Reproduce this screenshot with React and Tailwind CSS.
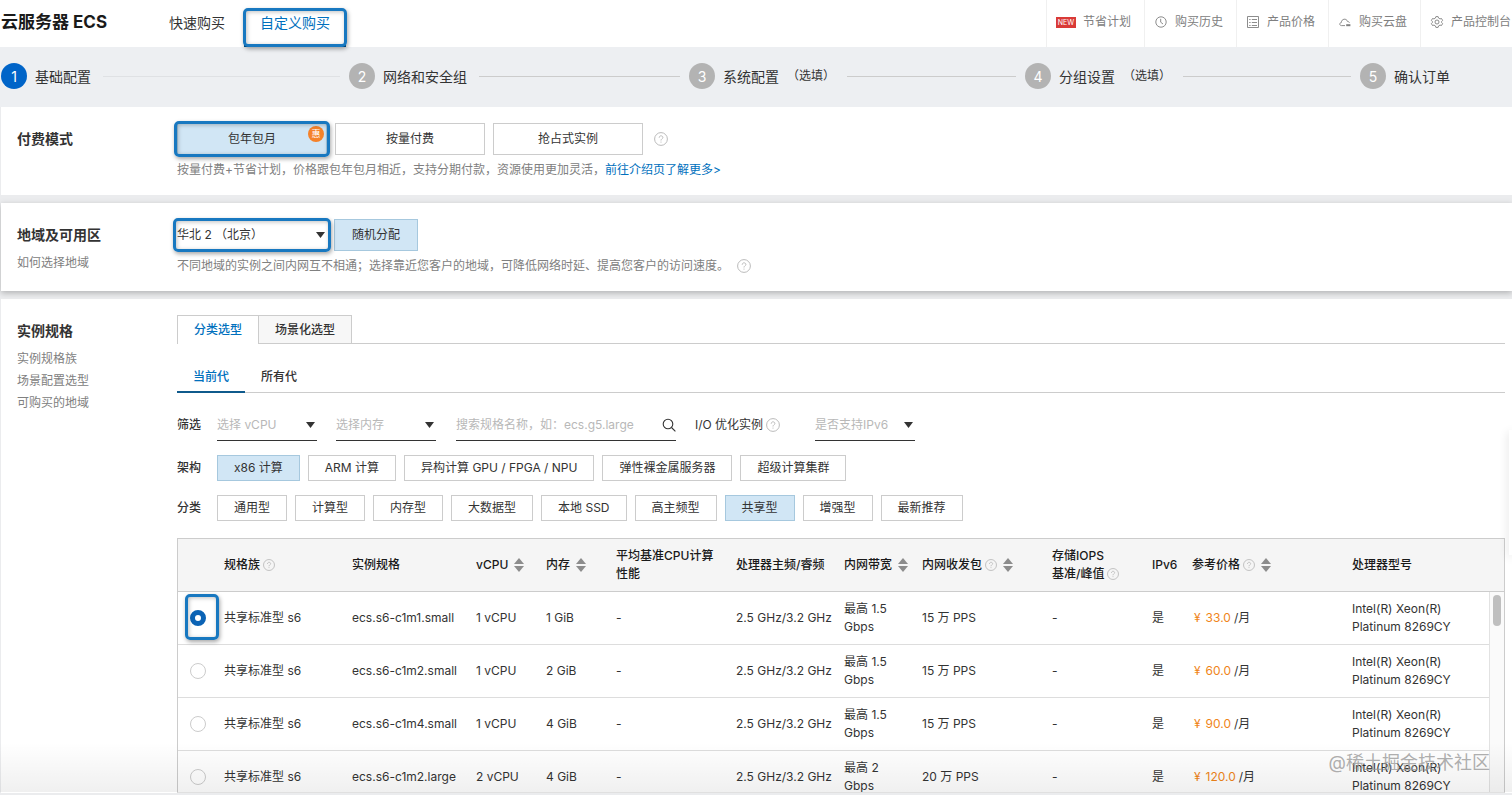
import React, { useState } from 'react';

const font = 'font-["Inter","Noto_Sans_CJK_SC",sans-serif]';

const links = [
  { label: '节省计划', icon: 'new' },
  { label: '购买历史', icon: 'clock' },
  { label: '产品价格', icon: 'list' },
  { label: '购买云盘', icon: 'cloud' },
  { label: '产品控制台', icon: 'gear' },
];

const steps = [
  { title: '基础配置' },
  { title: '网络和安全组' },
  { title: '系统配置', optional: true },
  { title: '分组设置', optional: true },
  { title: '确认订单' },
];

const archs = ['x86 计算', 'ARM 计算', '异构计算 GPU / FPGA / NPU', '弹性裸金属服务器', '超级计算集群'];
const categories = ['通用型', '计算型', '内存型', '大数据型', '本地 SSD', '高主频型', '共享型', '增强型', '最新推荐'];

const instances = [
  { spec: 'ecs.s6-c1m1.small', cpu: '1 vCPU', mem: '1 GiB', band: '最高 1.5', pps: '15 万 PPS', price: '33.0' },
  { spec: 'ecs.s6-c1m2.small', cpu: '1 vCPU', mem: '2 GiB', band: '最高 1.5', pps: '15 万 PPS', price: '60.0' },
  { spec: 'ecs.s6-c1m4.small', cpu: '1 vCPU', mem: '4 GiB', band: '最高 1.5', pps: '15 万 PPS', price: '90.0' },
  { spec: 'ecs.s6-c1m2.large', cpu: '2 vCPU', mem: '4 GiB', band: '最高 2', pps: '20 万 PPS', price: '120.0' },
];

const LinkIcon = ({ name }) => {
  if (name === 'new') {
    return (
      <span className="flex h-[11px] w-5 items-center justify-center bg-[#d93a37] text-[7px] leading-none text-white">
        NEW
      </span>
    );
  }
  return (
    <svg viewBox="0 0 14 14" className="size-[14px]" fill="none" stroke="#808080" strokeWidth="0.9">
      {name === 'clock' && (
        <>
          <circle cx="7" cy="7" r="5.2" />
          <path d="M6.7 3.8V7.2L9 9" />
        </>
      )}
      {name === 'list' && (
        <>
          <path d="M1.5 1.5H12.5V12.5H1.5Z" />
          <path d="M3.2 4.5H4.6M5.8 4.5H11M3.2 7.5H4.6M5.8 7.5H11M3.2 10.5H4.6M5.8 10.5H11" />
        </>
      )}
      {name === 'cloud' && (
        <>
          <path d="M7 10.6H3.4C1.2 10.4 1.2 7.8 3.3 7.6C3.4 3.6 8.6 3 9.4 6.4C10.6 6.4 11.2 7 11.4 7.8" />
          <path d="M8.2 10.2H12.4" strokeWidth="2" />
        </>
      )}
      {name === 'gear' && (
        <>
          <path d="M5.9 1.6H8.1L8.6 3.1L10 3.9L11.5 3.5L12.6 5.4L11.6 6.5V7.5L12.6 8.6L11.5 10.5L10 10.1L8.6 10.9L8.1 12.4H5.9L5.4 10.9L4 10.1L2.5 10.5L1.4 8.6L2.4 7.5V6.5L1.4 5.4L2.5 3.5L4 3.9L5.4 3.1Z" />
          <circle cx="7" cy="7" r="2" />
        </>
      )}
    </svg>
  );
};

const Help = ({ small }) => (
  <svg
    viewBox="0 0 14 14"
    className={small ? 'inline-block size-3 shrink-0' : 'inline-block size-[14px] shrink-0'}
    fill="none"
    stroke="#b3b3b3"
    strokeWidth="0.9"
  >
    <circle cx="7" cy="7" r="6.4" />
    <path d="M5.2 5.7C5.2 3.2 8.9 3.3 8.9 5.5C8.9 6.8 7 6.8 7 8.5M7 9.6V10.6" />
  </svg>
);

const Sorter = () => (
  <svg viewBox="0 0 10 14" className="inline-block h-[14px] w-[10px] shrink-0" fill="#8c8c8c">
    <path d="M5 0L10 6H0Z" />
    <path d="M5 14L10 8H0Z" />
  </svg>
);

const Caret = () => (
  <svg viewBox="0 0 9 6" className="pointer-events-none absolute right-[2px] top-1/2 h-[6px] w-[9px] -translate-y-1/2" fill="#333">
    <path d="M0 0H9L4.5 6Z" />
  </svg>
);

/* Blue frame that highlights a control */
const Highlight = ({ className }) => (
  <span
    className={`pointer-events-none absolute rounded-[5px] border-[3px] border-[#1878c0] shadow-[1px_2px_4px_rgba(0,0,0,0.35),inset_1px_1px_4px_rgba(0,0,0,0.25)] ${className}`}
  />
);

const FilterSelect = ({ label, className }) => (
  <div className={`relative w-[100px] border-b border-[#333] ${className}`}>
    <select aria-label={label} className="h-full w-full appearance-none bg-transparent text-[#b8b8b8] outline-none">
      <option>{label}</option>
    </select>
    <Caret />
  </div>
);

const Chips = ({ label, items, value, onChange }) => (
  <div className="flex items-center" role="group" aria-label={label}>
    <span className="w-10 font-medium">{label}</span>
    <div className="flex gap-2">
      {items.map((item) => (
        <button
          key={item}
          type="button"
          onClick={() => onChange(item)}
          className={`h-[26px] whitespace-nowrap border px-4 ${
            item === value ? 'border-[#a6c8de] bg-[#d1e6f5]' : 'border-[#ccc] bg-white'
          }`}
        >
          {item}
        </button>
      ))}
    </div>
  </div>
);

const Columns = () => (
  <colgroup>
    <col className="w-[38px]" />
    <col className="w-[128px]" />
    <col className="w-[124px]" />
    <col className="w-[70px]" />
    <col className="w-[70px]" />
    <col className="w-[120px]" />
    <col className="w-[108px]" />
    <col className="w-[78px]" />
    <col className="w-[130px]" />
    <col className="w-[100px]" />
    <col className="w-[40px]" />
    <col className="w-[160px]" />
    <col />
  </colgroup>
);

const HeadCell = ({ children, help, sort }) => (
  <th className="whitespace-nowrap pl-2 text-left font-medium">
    <span className="flex items-center">
      {children}
      {help && <span className="ml-[3px] flex"><Help small /></span>}
      {sort && <span className="ml-[6px] flex"><Sorter /></span>}
    </span>
  </th>
);

const InstanceTable = () => {
  const [selected, setSelected] = useState(0);
  return (
    <div className="mt-[17px] border border-[#ccc] border-b-[#e0e0e0] leading-[18px]">
      <table className="w-full table-fixed border-collapse bg-[#f5f5f5]">
        <Columns />
        <thead>
          <tr className="h-[52px] border-b border-[#ccc] text-[#1a1a1a]">
            <th />
            <HeadCell help>规格族</HeadCell>
            <HeadCell>实例规格</HeadCell>
            <HeadCell sort>vCPU</HeadCell>
            <HeadCell sort>内存</HeadCell>
            <HeadCell>平均基准CPU计算<br />性能</HeadCell>
            <HeadCell>处理器主频/睿频</HeadCell>
            <HeadCell sort>内网带宽</HeadCell>
            <HeadCell help sort>内网收发包</HeadCell>
            <th className="whitespace-nowrap pl-2 text-left font-medium">
              存储IOPS
              <span className="flex items-center gap-[3px]">基准/峰值<Help small /></span>
            </th>
            <HeadCell>IPv6</HeadCell>
            <HeadCell help sort>参考价格</HeadCell>
            <HeadCell>处理器型号</HeadCell>
          </tr>
        </thead>
      </table>
      <div className="flex h-[200px] overflow-hidden">
        <div className="min-w-0 flex-1">
          <table className="w-full table-fixed border-collapse">
            <Columns />
            <tbody>
              {instances.map((row, index) => (
                <tr key={row.spec} className="h-[53px] border-b border-[#ddd] [&>td]:whitespace-nowrap [&>td]:pl-2">
                  <td>
                    <span className="relative ml-1 flex size-4">
                      <input
                        type="radio"
                        name="instance"
                        aria-label={row.spec}
                        checked={selected === index}
                        onChange={() => setSelected(index)}
                        className="size-4 appearance-none rounded-full border border-[#ccc] bg-white checked:border-[5px] checked:border-[#0b63b5]"
                      />
                      {index === 0 && <Highlight className="-left-[5px] -top-[16px] h-[46px] w-[34px]" />}
                    </span>
                  </td>
                  <td>共享标准型 s6</td>
                  <td>{row.spec}</td>
                  <td>{row.cpu}</td>
                  <td>{row.mem}</td>
                  <td>-</td>
                  <td>2.5 GHz/3.2 GHz</td>
                  <td>{row.band}<br />Gbps</td>
                  <td>{row.pps}</td>
                  <td>-</td>
                  <td>是</td>
                  <td>
                    <span className="flex gap-[3px] pl-[2px]">
                      <span className="flex gap-[5px] text-[#f08519]"><span>¥</span>{row.price}</span>
                      /月
                    </span>
                  </td>
                  <td>Intel(R) Xeon(R)<br />Platinum 8269CY</td>
                </tr>
              ))}
            </tbody>
          </table>
        </div>
        <div className="w-[15px] border-l border-[#e2e2e2] bg-[#fafafa] px-[3px] pt-[3px]">
          <div className="h-[31px] rounded-full bg-[#bfbfbf]" />
        </div>
      </div>
    </div>
  );
};

const Section = ({ title, links: sideLinks = [], className = '', children }) => (
  <section className={`ml-px grid grid-cols-[160px_minmax(0,1fr)] bg-white pl-4 pt-4 ${className}`}>
    <div>
      <h2 className="text-[14px] font-semibold leading-8">{title}</h2>
      <div className="flex flex-col items-start pt-px text-[#808080]">
        {sideLinks.map((item) => (
          <a key={item} href="#" className="leading-[22px]">{item}</a>
        ))}
      </div>
    </div>
    <div>{children}</div>
  </section>
);

export default function App() {
  const [arch, setArch] = useState('x86 计算');
  const [category, setCategory] = useState('共享型');

  return (
    <div className={`relative min-h-screen overflow-hidden bg-[#ebecee] text-[12px] text-[#333] ${font}`}>
      {/* Top bar */}
      <header className="flex h-[47px] bg-white">
        <h1 className="ml-px w-[152px] whitespace-nowrap text-[17px] font-bold leading-[45px] text-[#1a1a1a]">云服务器 ECS</h1>
        <nav className="flex text-[14px] leading-[46px]">
          <a href="#" className="px-4">快速购买</a>
          <a href="#" className="relative ml-[3px] w-[102px] whitespace-nowrap border-b-2 border-[#00558f] px-4 text-center text-[#0070bd]">
            自定义购买
            <Highlight className="-left-px -right-px top-2 -bottom-[2px]" />
          </a>
        </nav>
        <div className="ml-auto flex shrink-0 text-[#808080]">
          {links.map((link) => (
            <a key={link.label} href="#" className="flex items-center gap-[7px] whitespace-nowrap border-l border-[#f0f0f0] pb-[3px] pl-[9px] pr-[13px] last:pr-px">
              <LinkIcon name={link.icon} />
              <span className="leading-[44px]">{link.label}</span>
            </a>
          ))}
        </div>
      </header>

      {/* Steps */}
      <ol className="grid h-[60px] grid-cols-[348fr_340fr_336fr_335fr_152fr] items-center bg-[#edeff2] pb-[2px] pl-px">
        {steps.map((step, index) => (
          <li key={step.title} className="flex items-center whitespace-nowrap text-[14px]">
            <span
              className={`flex size-[26px] items-center justify-center rounded-full text-white ${
                index === 0 ? 'bg-[#0064c8]' : 'bg-[#b3b3b3]'
              }`}
            >
              {index + 1}
            </span>
            <span className="ml-2">{step.title}</span>
            {step.optional && <span className="ml-2 text-[12px]">（选填）</span>}
            {index < 4 && <span className={`ml-3 mr-[9px] h-px flex-1 ${index === 0 ? 'bg-[#dfe1e4]' : 'bg-[#ccc]'}`} />}
          </li>
        ))}
      </ol>

      <main className="flex flex-col gap-2">
        <Section title="付费模式" className="pb-3">
          <div className="flex items-center gap-2">
            <button type="button" className="relative h-8 w-[150px] border border-[#a6c8de] bg-[#d1e6f5]">
              包年包月
              <span className="absolute right-[2px] top-[2px] flex size-4 items-center justify-center rounded-full bg-[#f5822a] text-[9px] text-white">惠</span>
              <Highlight className="-inset-x-1 -inset-y-[3px]" />
            </button>
            <button type="button" className="h-8 w-[150px] border border-[#ccc]">按量付费</button>
            <button type="button" className="h-8 w-[150px] border border-[#ccc]">抢占式实例</button>
            <span className="ml-[3px] flex"><Help /></span>
          </div>
          <p className="mt-1 pb-[2px] leading-[22px] text-[#808080]">
            按量付费+节省计划，价格跟包年包月相近，支持分期付款，资源使用更加灵活，
            <a href="#" className="text-[#0070bd]">前往介绍页了解更多&gt;</a>
          </p>
        </Section>

        <Section title="地域及可用区" links={['如何选择地域']} className="relative pb-3 shadow-[0_2px_6px_rgba(0,0,0,0.25)]">
          <div className="flex items-center gap-[7px]">
            <div className="relative h-8 w-[150px]">
              <select aria-label="地域" className="h-full w-full appearance-none bg-transparent outline-none">
                <option>华北 2 （北京）</option>
              </select>
              <Caret />
              <Highlight className="-inset-x-1 -inset-y-px" />
            </div>
            <button type="button" className="h-8 w-[84px] border border-[#a6c8de] bg-[#d1e6f5]">随机分配</button>
          </div>
          <p className="mt-1 flex items-center gap-2 pb-[2px] leading-[22px] text-[#808080]">
            不同地域的实例之间内网互不相通；选择靠近您客户的地域，可降低网络时延、提高您客户的访问速度。
            <Help />
          </p>
        </Section>

        <Section title="实例规格" links={['实例规格族', '场景配置选型', '可购买的地域']} className="pr-[7px]">
          <div role="tablist" className="flex h-[29px] font-medium">
            <button role="tab" aria-selected="true" type="button" className="w-[81px] border-l border-t border-[#ccc] text-[#0070bd]">分类选型</button>
            <button role="tab" aria-selected="false" type="button" className="w-[94px] border border-[#ccc] bg-[#f7f7f7]">场景化选型</button>
            <span className="flex-1 border-b border-[#ccc]" />
          </div>
          <div role="tablist" className="mt-4 flex h-[33px] border-b border-[#ccc] font-medium">
            <button role="tab" aria-selected="true" type="button" className="-mb-px w-[68px] border-b-2 border-[#0f5a8c] pt-[2px] text-[#0070bd]">当前代</button>
            <button role="tab" aria-selected="false" type="button" className="w-[68px] pt-px">所有代</button>
          </div>

          {/* Filters */}
          <div className="mt-4 flex h-8 items-center">
            <span className="w-10 font-medium">筛选</span>
            <FilterSelect label="选择 vCPU" className="mr-[19px] h-[31px]" />
            <FilterSelect label="选择内存" className="mr-5 h-[31px]" />
            <div className="mr-[19px] flex h-[31px] w-[220px] items-center border-b border-[#333]">
              <input
                type="text"
                aria-label="搜索规格名称"
                placeholder="搜索规格名称，如：ecs.g5.large"
                className="min-w-0 flex-1 bg-transparent outline-none placeholder:text-[#b8b8b8]"
              />
              <svg viewBox="0 0 14 14" className="size-[14px]" fill="none" stroke="#333" strokeWidth="1.1">
                <circle cx="6" cy="6" r="4.8" />
                <path d="M9.5 9.5L13.4 13.4" />
              </svg>
            </div>
            <span className="mr-[35px] flex items-center gap-[3px]">I/O 优化实例<Help /></span>
            <FilterSelect label="是否支持IPv6" className="h-[31px]" />
          </div>
          <div className="mt-[14px] flex flex-col gap-[14px]">
            <Chips label="架构" items={archs} value={arch} onChange={setArch} />
            <Chips label="分类" items={categories} value={category} onChange={setCategory} />
          </div>

          <InstanceTable />
        </Section>
      </main>

      <div className="pointer-events-none absolute inset-x-0 bottom-[3px] h-[50px] bg-linear-to-b from-transparent to-black/6" />
      <aside className="absolute right-0 top-[430px] h-[125px] w-[3px] bg-white shadow-[0_2px_10px_rgba(0,0,0,0.2)]" />
      <div className="pointer-events-none absolute bottom-[18px] right-[22px] text-[18px] leading-7 text-[#999]/80">@稀土掘金技术社区</div>
    </div>
  );
}
